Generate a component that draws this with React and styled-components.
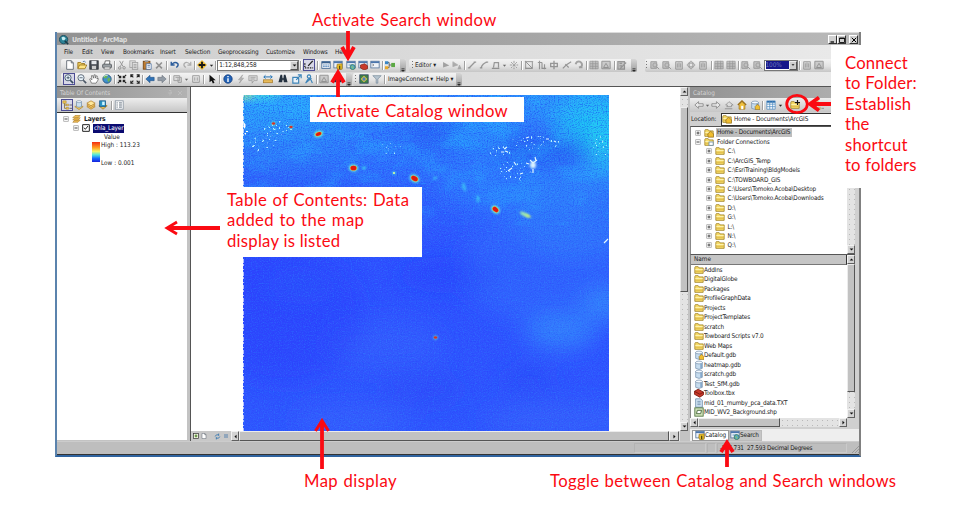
import React from "react";
import styled, { createGlobalStyle } from "styled-components";

const Global = createGlobalStyle`
  * { box-sizing: border-box; }
  body { margin: 0; background: #fff; overflow: hidden; }
`;

const ui = `"DejaVu Sans Condensed", "DejaVu Sans", sans-serif`;

const Page = styled.main`
  position: relative;
  width: 979px;
  height: 506px;
  overflow: hidden;
  background: #fff;
  font-family: ${ui};
  font-stretch: condensed;
  font-size: 6.4px;
  color: #1c1c1c;
`;

const AppWindow = styled.section`
  display: flex;
  flex-direction: column;
  width: 806px;
  height: 425px;
  margin: 32px 0 0 55px;
  border-left: 2px solid #5b83ad;
  border-right: 2px solid #808080;
  border-bottom: 2px solid #2f64a0;
  background: #c3c3c3;
`;

const TitleBar = styled.header`
  display: flex;
  align-items: center;
  gap: 3px;
  height: 13px;
  flex: none;
  padding: 1px 1px 0 2px;
  border-top: 1px solid #dcdcdc;
  background: linear-gradient(90deg, #929292, #a2a2a2 50%, #b9b9b9);
  color: #dedede;
  font-size: 7px;
  font-weight: bold;
  letter-spacing: -0.45px;
`;
const Grow = styled.div`
  flex: 1;
`;
const WindowButton = styled.span`
  display: grid;
  place-items: center;
  width: 9px;
  height: 9px;
  margin-left: ${(p) => (p.$first ? 0 : -3)}px;
  background: #d0d0d0;
  border: 1px solid;
  border-color: #fff #333 #333 #fff;
`;

const Bars = styled.div`
  flex: none;
  height: 42px;
  background: linear-gradient(90deg, #cdcdcd, #dadada 45%, #eaeaea);
  border-bottom: 1px solid #555;
`;
const MenuBar = styled.nav`
  display: flex;
  align-items: center;
  height: 13px;
  padding-left: 7px;
`;
const MenuItem = styled.span`
  width: ${(p) => p.$w}px;
  white-space: nowrap;
  letter-spacing: -0.15px;
`;
const ToolRow = styled.div`
  display: flex;
  align-items: center;
  height: 14px;
  padding-left: 4px;
`;
const ToolGroup = styled.div`
  display: flex;
  align-items: center;
  flex: none;
  width: ${(p) => p.$w}px;
  height: 13px;
  margin-right: ${(p) => p.$gap || 0}px;
  padding-left: ${(p) => p.$pad ?? 2}px;
  border-radius: 2px;
  background: linear-gradient(#f3f3f3, #e3e3e3 55%, #c6c6c6);
`;
const Slot = styled.span`
  display: grid;
  place-items: center;
  flex: none;
  width: ${(p) => p.$w}px;
  height: 12px;
  opacity: ${(p) => (p.$dim ? 0.62 : 1)};
`;
const Boxed = styled.span`
  display: grid;
  place-items: center;
  width: 12px;
  height: 12px;
  border: 1px solid #4d4d94;
  background: #d8d8e8;
`;
const Separator = styled.i`
  flex: none;
  width: 1px;
  height: 9px;
  margin: 0 1px;
  background: #a0a0a0;
  box-shadow: 1px 0 #fff;
`;
const Grip = styled.i`
  flex: none;
  width: 1px;
  height: 8px;
  margin: 0 2px 0 1px;
  background: repeating-linear-gradient(#777 0 1px, transparent 1px 3px);
`;
const Overflow = styled.span`
  display: grid;
  place-items: end center;
  width: 6px;
  height: 13px;
  margin-left: auto;
  border-radius: 0 2px 2px 0;
  background: linear-gradient(#d6d6d6, #9d9d9d);
`;
const ToolLabel = styled.span`
  flex: none;
  width: ${(p) => p.$w}px;
  white-space: nowrap;
  letter-spacing: -0.1px;
`;
const ScaleBox = styled.div`
  display: flex;
  align-items: center;
  flex: none;
  width: ${(p) => p.$w}px;
  height: 11px;
  padding-left: 1px;
  border: 1px solid #777;
  background: #fff;
  letter-spacing: -0.1px;
`;
const DropButton = styled.span`
  display: grid;
  place-items: center;
  width: 8px;
  height: 9px;
  margin-left: auto;
  background: #cfcfcf;
  border: 1px solid;
  border-color: #eee #555 #555 #eee;
`;
const Percent = styled.span`
  width: 23px;
  height: 8px;
  line-height: 8px;
  background: #16168a;
  color: #7078bd;
`;

const Body = styled.div`
  display: flex;
  flex: 1;
  min-height: 0;
`;
const StatusBar = styled.footer`
  display: flex;
  align-items: center;
  flex: none;
  height: 14px;
  border-top: 1px solid #ccc;
  border-bottom: 1px solid #333;
  background: #bebebe;
  padding-left: 577px;
`;
const StatusCell = styled.span`
  width: ${(p) => p.$w}px;
  height: 10px;
  line-height: 9px;
  margin-right: 1px;
  padding-left: ${(p) => p.$pad || 0}px;
  border: 1px solid;
  border-color: #b3b3b3 #cacaca #cacaca #b3b3b3;
  white-space: nowrap;
  letter-spacing: -0.26px;
`;
const ResizeGrip = styled.svg`
  margin: 2px 0 0 auto;
`;

const Contents = styled.aside`
  display: flex;
  flex-direction: column;
  width: 130px;
  flex: none;
`;
const PanelTitle = styled.div`
  display: flex;
  align-items: center;
  gap: 4px;
  flex: none;
  height: 11px;
  padding: 0 4px 0 3px;
  background: linear-gradient(90deg, #929292, #b2b2b2);
  color: #d3d3d3;
  letter-spacing: -0.03px;
`;
const PanelTools = styled.div`
  display: flex;
  align-items: center;
  flex: none;
  height: 14px;
  padding-left: 4px;
  background: linear-gradient(#eeeeee, #c6c6c6);
`;
const ContentsTree = styled.div`
  flex: 1;
  margin-bottom: 1px;
  padding: 1px 0 0 6px;
  background: #fff;
  border-top: 1px solid #333;
`;
const TreeRow = styled.div`
  display: flex;
  align-items: center;
  height: ${(p) => p.$h || 9.5}px;
  padding-left: ${(p) => p.$indent || 0}px;
  gap: 3px;
  white-space: nowrap;
  letter-spacing: -0.14px;
`;
const Bold = styled.b`
  font-size: 6.7px;
`;
const Selected = styled.span`
  height: 9px;
  line-height: 8px;
  padding: 0 1px;
  background: #0b0b70;
  color: #fff;
`;
const Legend = styled.div`
  display: flex;
  gap: 1px;
  margin: 0 0 0 29px;
`;
const Ramp = styled.i`
  width: 8px;
  height: 20px;
  background: linear-gradient(#f32d12, #ff9d21 28%, #f4f665 47%, #4ee7e0 64%, #156aff 82%, #1821dc);
`;
const LegendLabels = styled.div`
  display: flex;
  flex-direction: column;
  justify-content: space-between;
  height: 26px;
  margin-top: -1px;
  line-height: 8px;
  letter-spacing: 0;
`;
const LegendHeading = styled.div`
  height: 9px;
  line-height: 9px;
  padding-left: 41px;
`;

const MapPane = styled.section`
  display: grid;
  grid-template-columns: 489px 8px;
  grid-template-rows: 1fr 10px;
  flex: none;
  width: 500px;
  margin-left: 3px;
  border-left: 1px solid #555;
`;
const MapCanvas = styled.div`
  display: flex;
  padding: 8px 0 0 52px;
  background: #fff;
  overflow: hidden;
`;
const ScrollBar = styled.div`
  display: flex;
  flex-direction: ${(p) => (p.$row ? "row" : "column")};
  width: ${(p) => (p.$w ? `${p.$w}px` : "auto")};
  min-width: 0;
  background-color: #e3e3e3;
  background-image: radial-gradient(#b9b9b9 0.7px, transparent 0.8px);
  background-size: 5px 5px;
`;
const ScrollButton = styled.span`
  display: grid;
  place-items: center;
  flex: none;
  width: ${(p) => p.$w || 8}px;
  height: ${(p) => p.$h || 9}px;
  background: #d3d3d3;
  border: 1px solid;
  border-color: #f2f2f2 #606060 #606060 #f2f2f2;
`;
const Thumb = styled.i`
  flex: none;
  width: ${(p) => p.$w}px;
  height: ${(p) => p.$h}px;
  margin: ${(p) => p.$m || 0};
  background: #c2c2c2;
  border: 1px solid;
  border-color: #ececec #555 #555 #ececec;
`;
const ViewTools = styled.div`
  display: flex;
  align-items: center;
  justify-content: space-between;
  flex: none;
  width: 40px;
  padding: 0 2px;
  background: #c8c8c8;
`;
const ViewPair = styled.span`
  display: flex;
  gap: ${(p) => p.$gap}px;
`;

const CatalogPane = styled.aside`
  display: flex;
  flex-direction: column;
  width: 169px;
  flex: none;
  background: #d0d0d0;
`;
const LocationRow = styled.div`
  display: flex;
  align-items: center;
  flex: none;
  height: 14px;
  letter-spacing: -0.1px;
  padding-left: 1px;
`;
const LocationField = styled.div`
  display: flex;
  align-items: center;
  gap: 2px;
  width: 138px;
  height: 13px;
  margin-left: auto;
  border: 1px solid #333;
  background: #fff;
`;
const ListBox = styled.div`
  display: flex;
  flex: none;
  width: 165px;
  height: ${(p) => p.$h}px;
  background: #fff;
  border-top: 1px solid #555;
  border-left: 1px solid #888;
`;
const ListColumn = styled.div`
  display: flex;
  flex-direction: column;
  width: 156px;
  overflow: hidden;
  padding: ${(p) => p.$pad || 0};
`;
const HomeLabel = styled.span`
  height: 9px;
  line-height: 8.5px;
  margin-left: -1px;
  padding: 0 2px 0 1px;
  background: #bdbdbd;
`;
const NameHeader = styled.div`
  flex: none;
  height: 10px;
  line-height: 9px;
  padding-left: 3px;
  background: #c5c5c5;
  border-right: 1px solid #333;
  border-bottom: 1px solid #777;
`;
const FileRow = styled.div`
  display: flex;
  align-items: center;
  flex: none;
  height: 9.5px;
  padding-left: 3px;
  white-space: nowrap;
  letter-spacing: -0.17px;
`;
const Tabs = styled.div`
  display: flex;
  align-items: center;
  flex: 1;
  margin-top: 2px;
  padding-left: 2px;
  background: #eee;
`;
const Tab = styled.span`
  display: flex;
  align-items: center;
  width: ${(p) => p.$w}px;
  height: 11px;
  padding-left: ${(p) => (p.$on ? 2 : 0)}px;
  border: 1px solid ${(p) => (p.$on ? "#999" : "#bbb")};
  background: ${(p) => (p.$on ? "#fff" : "#c6c6c6")};
  letter-spacing: -0.15px;
`;

const Note = styled.div`
  position: absolute;
  left: ${(p) => p.$x}px;
  top: ${(p) => p.$y}px;
  width: ${(p) => p.$w}px;
  height: ${(p) => p.$h}px;
  padding: ${(p) => p.$pad || 0};
  background: #fff;
  color: #fb0a12;
  font: 16.7px/20.4px Lato, sans-serif;
  white-space: pre;
`;
const Line = styled.div`
  letter-spacing: ${(p) => p.$ls}px;
  word-spacing: ${(p) => p.$ws || 0}px;
`;
const Arrows = styled.svg`
  position: absolute;
  inset: 0;
  pointer-events: none;
`;

const folderShape = (
  <>
    <path d="M1 3V10H11V3.5H6L5 2H1.5Z" fill="#f7dc69" stroke="#a18428" />
    <path d="M1.5 5.5H10.5" stroke="#fff8c0" />
    <path d="M1.5 7.5H10.5" stroke="#d6b040" />
  </>
);
const windowShape = (
  <>
    <rect x="1" y="1.5" width="10" height="8" fill="#eef2f8" stroke="#55749a" />
    <path d="M1 2.7H11" stroke="#4b75ad" strokeWidth="2" />
  </>
);
const cylinder = (
  <>
    <path d="M2 3V10Q6 12.500 10 10V3Z" fill="#c7ddef" stroke="#6c88a4" strokeWidth=".8" />
    <ellipse cx="6" cy="3" rx="4" ry="1.7" fill="#f5faff" stroke="#6c88a4" strokeWidth=".8" />
    <path d="M8.500 4.500V10" stroke="#6f98c0" strokeWidth="1.500" />
  </>
);
const glyphs = {
  new: <path d="M2 .8H7.500L10 3.500V11.200H2ZM7.500 .8V3.500H10" fill="#fff" stroke="#59616c" />,
  open: (
    <>
      <path d="M1 10V3H4.500L5.500 4.200H9V6" fill="#e9c95c" stroke="#9b741b" />
      <path d="M1 10.500L3 6H11.700L9.500 10.500Z" fill="#ffe582" stroke="#9b741b" />
      <path d="M7 2Q9 .5 10.500 2.800" fill="none" stroke="#4b71a3" />
    </>
  ),
  save: (
    <>
      <rect x="1" y="1" width="10" height="10" fill="#4b5057" stroke="#22262c" />
      <rect x="3" y="1" width="6" height="4" fill="#e5e8eb" />
      <rect x="3.500" y="7" width="5" height="4" fill="#ccc" />
    </>
  ),
  print: (
    <>
      <path d="M3 5L4 1H9.500L9 5" fill="#fff" stroke="#555" />
      <rect x=".8" y="5" width="10.500" height="4.500" rx="1" fill="#9aa0a4" stroke="#4c5155" />
      <path d="M3 8.500H9.500V11H2.500Z" fill="#eee" stroke="#666" strokeWidth=".7" />
    </>
  ),
  cut: (
    <g fill="none" stroke="#6c6c6c" strokeWidth="1.200">
      <path d="M3 1L7.500 8M7.500 1L4 8" />
      <circle cx="3.300" cy="9.500" r="1.500" />
      <circle cx="8.500" cy="9.300" r="1.500" />
    </g>
  ),
  copy: (
    <g fill="#d8d8d8" stroke="#777">
      <rect x="1" y="1" width="6.500" height="8" />
      <rect x="4" y="3" width="6.500" height="8.200" />
      <path d="M5.500 5.500H9M5.500 7.200H9M5.500 9H9" />
    </g>
  ),
  paste: (
    <>
      <rect x="1.500" y="1.500" width="8" height="9.500" fill="#c17c2e" stroke="#704212" />
      <rect x="3.500" y=".5" width="4" height="2.200" fill="#999" />
      <path d="M5 4.500H11V11.200H5ZM6.500 6.500H9.500M6.500 8.500H9.500" fill="#fff" stroke="#446c9e" strokeWidth=".9" />
    </>
  ),
  del: <path d="M2.500 3L9.500 10M9.500 3L2.500 10" stroke="#5f5f5f" strokeWidth="2" />,
  undo: <path d="M1.500 2V6H5.500M2 5.500Q6 1 9.500 4.500Q10.500 7 7.500 9" fill="none" stroke="#2d5d9b" strokeWidth="1.700" />,
  redo: <path d="M10.500 2V6H6.500M10 5.500Q6 1 2.500 4.500Q1.500 7 4.500 9" fill="none" stroke="#888" strokeWidth="1.500" />,
  add: (
    <>
      <path d="M6 0L12 6L6 12L0 6Z" fill="#eebd36" />
      <path d="M6 2V10M2 6H10" stroke="#151515" strokeWidth="2.200" />
    </>
  ),
  caret: <path d="M2 4H10L6 9Z" fill="#222" />,
  editor: (
    <>
      <path d="M1 4V8.500M1 9.500H11" stroke="#222" strokeWidth="1.600" strokeDasharray="1.800 1.200" />
      <path d="M5 7L10.500 1" stroke="#222" strokeWidth="1.600" />
    </>
  ),
  table: (
    <>
      <rect x="1" y="2" width="10" height="8" fill="#fff" stroke="#39608e" />
      <path d="M1 3H11" stroke="#39608e" strokeWidth="2" />
      <path d="M2.500 6H9.500M2.500 8H9.500" stroke="#4b7fb7" strokeWidth="1.200" strokeDasharray="2 .6" />
    </>
  ),
  catalog: (
    <>
      {windowShape}
      <path d="M5 5L11 4.500V11L6 12L4.500 9Z" fill="#e8bd25" stroke="#846318" strokeWidth=".7" />
      <path d="M8 7V11" stroke="#4c4112" strokeWidth="1.500" />
    </>
  ),
  search: (
    <>
      {windowShape}
      <path d="M3 6H8" stroke="#79a5cf" strokeWidth="1.500" />
      <circle cx="8" cy="8.500" r="3" fill="#58a5d2" stroke="#3a7b54" />
      <path d="M7 7.500L8.500 10" stroke="#84c865" strokeWidth="1.700" />
    </>
  ),
  toolbox: (
    <>
      {windowShape}
      <path d="M3 6L8 4.500L11.500 7V10.500L7 12L3 9.500Z" fill="#c93a2a" stroke="#7d1f15" strokeWidth=".8" />
    </>
  ),
  python: (
    <>
      {windowShape}
      <path d="M3 5L4.500 6L3 7" fill="none" stroke="#333" strokeWidth=".8" />
    </>
  ),
  model: (
    <>
      <path d="M2.500 3H5V6H9M2.500 9H5V6" fill="none" stroke="#555" />
      <rect x="0" y="1.500" width="4" height="3.500" fill="#3a86c5" />
      <rect x="0" y="7.500" width="4" height="3.500" fill="#e7a92b" />
      <rect x="7.500" y="3.500" width="4.500" height="5" fill="#5ca944" />
    </>
  ),
  more: <path d="M3 5H9M3 8H9L6 11Z" fill="#222" stroke="#222" />,
  play: <path d="M2.500 2.500L10 6.500L2.500 9Z" fill="#777" />,
  playA: <path d="M1 2L7 6L1 8ZM7 11L9 6L11 11M8 9.500H10.500" fill="#888" stroke="#888" strokeWidth=".8" />,
  segment: <path d="M2.500 9.500L9.500 2.500M1 9.500H4M8 2.500H11" stroke="#666" strokeWidth="1.600" />,
  arc: <path d="M2.500 9.500Q4 4 9.500 2.500M1 9.500H4M8 2.500H11" fill="none" stroke="#666" strokeWidth="1.500" />,
  sketch: <path d="M1 10H10M3 9L4 3H9V9" fill="none" stroke="#666" strokeWidth="1.500" />,
  spark: <path d="M6 1V11M1 6H11M2.500 2.500L9.500 9.500M9.500 2.500L2.500 9.500" stroke="#777" strokeWidth="1.200" strokeDasharray="3 1" />,
  vertex: <path d="M2 1V11M1 2H11M10 2V10H2L10 10M2 2L10 10" fill="none" stroke="#666" strokeWidth="1.200" />,
  split: <path d="M3 1V11M1 3H6M6 3V10H11M9 5V11" fill="none" stroke="#666" strokeWidth="1.400" />,
  crossbox: <path d="M2 4H10V8H2ZM6 1V11" fill="none" stroke="#666" strokeWidth="1.600" />,
  slash: <path d="M1 10L5 6L11 2M4 5L8 9" stroke="#666" strokeWidth="1.400" />,
  rotate: <path d="M2 5Q3 1 7 2Q11 4 9 8L6 9M9 10V7" fill="none" stroke="#777" strokeWidth="2.300" />,
  grid: <path d="M1 1.500H11V10.500H1ZM1 4.500H11M1 7.500H11M4.500 1V11M8 1V11" fill="#aaa" stroke="#666" strokeWidth=".9" />,
  photo: <path d="M1 1.500H11V10.500H1ZM3 9L6 4L9 9Z" fill="#b8b8b8" stroke="#666" strokeWidth="1.200" />,
  edit: <path d="M1 2H9V11H1ZM3 4H6M3 7H6M4 10L11 3" fill="#aaa" stroke="#666" strokeWidth="1.400" />,
  pageZoom: <path d="M1 2H8V10H1ZM6 3.500A2.500 2.500 0 1 1 6 8.500A2.500 2.500 0 1 1 6 3.500M8 8L11 11" fill="#aaa" stroke="#777" strokeWidth="1.200" />,
  pageHand: <path d="M2 2H10V11H2ZM4 9V4M6 9V3M8 9V4" fill="#c4c4c4" stroke="#777" strokeWidth="1.200" />,
  move: <path d="M1 6L4 3V9ZM11 6L8 3V9ZM6 1L9 4H3ZM6 11L3 8H9Z" fill="#aaa" stroke="#777" strokeWidth=".9" />,
  zoomIn: (
    <g fill="#eaf5fc" stroke="#33485e">
      <circle cx="4.800" cy="4.500" r="3.700" />
      <path d="M7.500 7.500L11 11" strokeWidth="2" />
      <path d="M3 4.500H6.800M4.900 2.700V6.300" />
    </g>
  ),
  zoomOut: (
    <g fill="#eaf5fc" stroke="#4a5665">
      <circle cx="4.800" cy="4.500" r="3.700" />
      <path d="M7.500 7.500L11 11" strokeWidth="2" />
      <path d="M3 4.500H6.800" />
    </g>
  ),
  hand: <path d="M3 11L.8 6L2 5.500L3.500 7L3 2H4.500L5.500 5L6 1H7.500V5L9 2L10 2.500L9.500 6L11 5V7L8.500 11Z" fill="#fff" stroke="#555" strokeWidth=".8" />,
  globe: (
    <>
      <circle cx="6" cy="6" r="5" fill="#3f91cd" stroke="#29517b" />
      <path d="M4 1L7 2L5.500 5L2 5V3ZM8 4L10.500 6L8 10L6 7Z" fill="#69b359" />
      <path d="M2 3Q4 1 7 1.500" stroke="#e9faff" fill="none" />
    </>
  ),
  logo: (
    <>
      <circle cx="5.500" cy="5.500" r="5" fill="#2b8196" stroke="#174a5b" />
      <path d="M3 3Q6 1 8 4Q7 7 4 6Z" fill="#c8eef1" />
      <path d="M7 7L11 11" stroke="#173c4a" strokeWidth="2" />
    </>
  ),
  inward: <path d="M1 1L4.500 4.500M4.500 2V4.500H2M11 1L7.500 4.500M7.500 2V4.500H10M1 11L4.500 7.500M2 7.500H4.500V10M11 11L7.500 7.500M7.500 10V7.500H10" fill="none" stroke="#222" strokeWidth="1.300" />,
  outward: <path d="M1 1L4 4M1 4V1H4M11 1L8 4M8 1H11V4M1 11L4 8M1 8V11H4M11 11L8 8M8 11H11V8" fill="none" stroke="#222" strokeWidth="1.300" />,
  back: <path d="M1 6L6 1.500V4H11V8H6V10.500Z" fill="#2f72b6" stroke="#245386" strokeWidth=".7" />,
  forward: <path d="M11 6L6 1.500V4H1V8H6V10.500Z" fill="#929ba5" stroke="#6b747d" strokeWidth=".7" />,
  selectFeature: <path d="M1 2H8V8H1ZM3 4H10V10H6V5" fill="#d6d6d6" stroke="#777" strokeWidth="1.200" />,
  clear: <path d="M2 2H10V10H2ZM4.500 4V8M7.500 4V8" fill="#ddd" stroke="#777" strokeWidth="1.200" />,
  pointer: <path d="M3 1V10L5.500 8L7 11.500L9 10.500L7.500 7.500H10.500Z" fill="#111" />,
  identify: (
    <>
      <circle cx="6" cy="6" r="5" fill="#2364b8" stroke="#153d7e" />
      <path d="M6 2.500V4M6 5V9.500" stroke="#fff" strokeWidth="1.700" />
    </>
  ),
  lightning: <path d="M8 1L3 7H6L4 11L9 5H6Z" fill="#999" stroke="#777" strokeWidth=".8" />,
  bubble: <path d="M1 2H11V8H7L5 11V8H1ZM3 4H9M3 6H8" fill="#ccc" stroke="#777" />,
  measure: (
    <>
      <path d="M1 3.500H11M3 1.500L1 3.500L3 5.500M9 1.500L11 3.500L9 5.500" fill="none" stroke="#2674b5" strokeWidth="1.200" />
      <rect x=".5" y="7" width="11" height="3.500" fill="#e8bb59" stroke="#a27424" strokeWidth=".8" />
    </>
  ),
  find: <path d="M3 1H5L5.500 5H6.500L7 1H9L11.500 10H7L6.500 7H5.500L5 10H.5Z" fill="#24313f" />,
  route: <path d="M1 4H8V11H1ZM5 7L10 2M7 1H11V5" fill="#e9f2f9" stroke="#3d84b8" strokeWidth="1.400" />,
  person: <path d="M6 1A2 2 0 1 1 5.900 1ZM2 11Q5 5 6 6Q8 5 10 11M3 10L9 5" fill="none" stroke="#3d84b8" strokeWidth="1.400" />,
  world: (
    <>
      <rect x="1" y="1" width="10" height="10" fill="#3f8447" stroke="#2f425f" />
      <path d="M6 2L10 6L6 10L2 6Z" fill="#e3c24a" />
      <circle cx="6" cy="6" r="2" fill="#4f81b7" />
    </>
  ),
  dataView: (
    <>
      <rect x="1" y="1" width="10" height="10" fill="#f5f5e6" stroke="#333" strokeWidth="1.400" />
      <circle cx="6" cy="6" r="2.800" fill="#6b9b4b" />
    </>
  ),
  filter: <path d="M1 2H11L7 6V11H5V6Z" fill="#b7c5cf" stroke="#728797" strokeWidth=".8" />,
  listTree: (
    <>
      <path d="M3 3V10H7M3 6H6" fill="none" stroke="#8e7330" />
      <path d="M1 1H5V4H1ZM5 5H8V7H5ZM5 9H8V11H5Z" fill="#edc352" stroke="#a58230" strokeWidth=".6" />
      <path d="M9 6H12M9 10H12" stroke="#555" />
    </>
  ),
  cylinder,
  layers: (
    <g fill="#f4cd6b" stroke="#b4812b" strokeWidth=".9">
      <path d="M1 8L6 11L11 8L6 5Z" />
      <path d="M1 6L6 9L11 6L6 3Z" />
      <path d="M1 3.800L6 7L11 3.800L6 1Z" fill="#ffe89b" />
    </g>
  ),
  dbSource: (
    <>
      <path d="M1 8L6 11.500L11 8L6 6Z" fill="#eec75c" stroke="#ad8229" strokeWidth=".8" />
      <path d="M3 2V8Q6 9.500 9 8V2Z" fill="#c9deee" stroke="#6c88a4" strokeWidth=".8" />
      <ellipse cx="6" cy="2" rx="3" ry="1.200" fill="#f5faff" stroke="#6c88a4" strokeWidth=".7" />
    </>
  ),
  dbSelect: (
    <>
      <path d="M1 7L6 11L11 7L7 5Z" fill="#eec75c" stroke="#ad8229" />
      <rect x="2" y="1" width="7" height="7" fill="#2994c5" stroke="#225d89" />
      <rect x="5" y="2" width="3" height="4" fill="#d0f5ff" />
    </>
  ),
  options: (
    <>
      <rect x="1.500" y="1" width="9.500" height="10" fill="#fff" stroke="#8793a0" />
      <path d="M3 3.500H4.500M6 3.500H9.500M3 6H4.500M6 6H9.500M3 8.500H4.500M6 8.500H9.500" stroke="#465566" />
    </>
  ),
  stack: (
    <g fill="#f0bd54" stroke="#a97827" strokeWidth=".8">
      <path d="M1 11L4 8H11L8 11Z" />
      <path d="M1 8L4 5H11L8 8Z" />
      <path d="M1 5L4 2H11L8 5Z" />
    </g>
  ),
  folder: folderShape,
  folderLink: (
    <>
      {folderShape}
      <rect x="6" y="6" width="5" height="4" fill="#fff" stroke="#6b8daa" />
    </>
  ),
  folderHome: (
    <>
      {folderShape}
      <path d="M4.500 7L8 4L11.500 7V11H5Z" fill="#f0be31" stroke="#8c681b" strokeWidth=".8" />
    </>
  ),
  folderPlus: (
    <>
      {folderShape}
      <path d="M9 0V6M6 3H12" stroke="#111" strokeWidth="1.400" />
    </>
  ),
  home: (
    <>
      <path d="M1 6L6 1L11 6" fill="none" stroke="#976c16" strokeWidth="1.500" />
      <path d="M2.500 5.500V11H9.500V5.500L6 2Z" fill="#f0c03a" stroke="#976c16" strokeWidth=".8" />
      <rect x="5" y="7" width="2.500" height="4" fill="#fff" />
    </>
  ),
  homeGdb: (
    <>
      {cylinder}
      <path d="M6 8L9 5L12 8V11.500H6.500Z" fill="#f0be31" stroke="#8c681b" strokeWidth=".7" />
    </>
  ),
  arrowLeftOutline: <path d="M1 6L5.500 2V4.500H11V7.500H5.500V10Z" fill="#e9e9e9" stroke="#858585" />,
  arrowRightOutline: <path d="M11 6L6.500 2V4.500H1V7.500H6.500V10Z" fill="#e9e9e9" stroke="#858585" />,
  up: <path d="M1 10.500H10M3 8H9V6H11L6 2L2 6H4V8" fill="#ddd" stroke="#666" />,
  blueGrid: (
    <>
      <rect x="1" y="1" width="10" height="10" fill="#fff" />
      <path d="M1 2H11" stroke="#286bab" strokeWidth="2.500" />
      <path d="M1 5H11M1 8H11M1 11H11M1 1V11M4.500 1V11M8 1V11M11 1V11" stroke="#4c8bc3" strokeWidth=".9" />
    </>
  ),
  box: (
    <>
      <path d="M.5 4L5 1.500L11.500 5V8L7 11L.5 7.500Z" fill="#c63829" stroke="#75170d" />
      <path d="M.5 4L7 7.500L11.500 5" stroke="#75170d" />
    </>
  ),
  text: <path d="M2 1H8L10 3V11H2ZM4 4H8M4 6H8M4 8H8" fill="#d4e7f6" stroke="#6b8ca9" />,
  shape: (
    <>
      <rect x="1" y="1" width="10" height="10" fill="#d1e3bb" stroke="#486d38" />
      <path d="M3 8L4 4H9L8 8Z" fill="#fff" stroke="#395a2d" />
    </>
  ),
  refresh: <path d="M2 6Q3 2 8 3M8 1V5M10 6Q9 10 4 9M4 11V7" fill="none" stroke="#3979b1" strokeWidth="1.500" />,
  pause: <path d="M4 2V10M8 2V10" stroke="#4f7ead" strokeWidth="1.800" />,
  plus: (
    <>
      <rect x="1.500" y="1.500" width="9" height="9" fill="#fff" stroke="#929292" strokeWidth="1.300" />
      <path d="M3 6H9M6 3V9" stroke="#222" strokeWidth="1.500" />
    </>
  ),
  minus: (
    <>
      <rect x="1.500" y="1.500" width="9" height="9" fill="#fff" stroke="#929292" strokeWidth="1.300" />
      <path d="M3 6H9" stroke="#222" strokeWidth="1.700" />
    </>
  ),
  check: <path d="M1 1H11V11H1ZM3 5.500L5 8L9 3" fill="#fff" stroke="#222" strokeWidth="1.500" />,
  triUp: <path d="M1.500 8.500H10.500L6 3.500Z" fill="#111" />,
  triDown: <path d="M1.500 3.500H10.500L6 8.500Z" fill="#111" />,
  triLeft: <path d="M8.500 1.500V10.500L3.500 6Z" fill="#111" />,
  triRight: <path d="M3.500 1.500V10.500L8.500 6Z" fill="#111" />,
  minWin: <path d="M1 10H8" stroke="#000" strokeWidth="2.500" />,
  maxWin: <path d="M1 2H11V11H1ZM1 3H11" fill="none" stroke="#000" strokeWidth="1.700" />,
  closeWin: <path d="M1.500 1.500L10.500 10.500M10.500 1.500L1.500 10.500" stroke="#000" strokeWidth="2" />,
  pin: <path d="M4 1H8V6H10H2M6 6V11" fill="none" stroke="#c4c4c4" strokeWidth="1.200" />,
  paleX: <path d="M2 2L10 10M10 2L2 10" stroke="#c4c4c4" strokeWidth="1.300" />,
};

const Svg = styled.svg`
  display: block;
  flex: none;
`;
function Icon({ name, size = 10 }) {
  return (
    <Svg width={size} height={size} viewBox="0 0 12 12" fill="none">
      {glyphs[name]}
    </Svg>
  );
}

function Tools({ items }) {
  return items.map((it, i) => {
    if (it === "|") return <Separator key={i} />;
    const [name, w = 12.2, opt] = it;
    if (name === "gap") return <Slot key={i} $w={w} />;
    return (
      <Slot key={i} $w={w} $dim={opt === "dim"}>
        {opt === "boxed" ? (
          <Boxed>
            <Icon name={name} size={10} />
          </Boxed>
        ) : (
          <Icon name={name} size={name === "caret" ? 5 : 10} />
        )}
      </Slot>
    );
  });
}

const menus = [
  ["File", 18], ["Edit", 19], ["View", 22], ["Bookmarks", 37], ["Insert", 25],
  ["Selection", 33], ["Geoprocessing", 48], ["Customize", 37], ["Windows", 32], ["Help", 20],
];
const standardA = [["new"], ["open"], ["save"], ["print"], "|", ["cut", 12.4, "dim"], ["copy", 12.4, "dim"], ["paste", 12.4], ["del", 12.4, "dim"], "|", ["undo", 12.6], ["redo", 12.4, "dim"], "|", ["add", 12], ["caret", 6], "|"];
const standardB = [["editor", 14, "boxed"], "|", ["table", 13], ["catalog"], ["search"], ["toolbox"], ["python"], "|", ["model", 12]];
const editorA = [["play", 11, "dim"], ["playA", 12, "dim"], "|", ["segment", 12, "dim"], ["arc", 12, "dim"], ["sketch", 12, "dim"], ["caret", 5, "dim"], ["spark", 13, "dim"], "|", ["vertex", 12.5, "dim"], ["split", 12.5, "dim"], ["crossbox", 12.5, "dim"], ["slash", 12, "dim"], ["rotate", 12, "dim"], "|", ["grid", 12, "dim"], ["photo", 13, "dim"], "|", ["edit", 12, "dim"]];
const layoutTools = [["pageZoom", 12, "dim"], ["pageZoom", 12, "dim"], ["pageHand", 12.2, "dim"], ["move", 12.2, "dim"], ["pageHand", 12.2, "dim"], "|", ["grid", 12, "dim"], ["grid", 12, "dim"], "|", ["pageZoom", 12, "dim"], ["pageZoom", 12, "dim"]];
const mapTools = [["zoomIn", 12.4, "boxed"], ["zoomOut", 12.4], ["hand", 12.4], ["globe", 13], "|", ["inward", 12.6], ["outward"], "|", ["back", 12.5], ["forward", 12], "|", ["selectFeature", 12.5, "dim"], ["caret", 6, "dim"], ["clear", 12.5, "dim"], "|", ["pointer", 12.5], "|", ["identify", 14], ["lightning", 12, "dim"], ["bubble", 13, "dim"], ["measure", 16], ["find", 15], ["route", 12], ["person", 12], "|", ["photo", 13, "dim"], ["find", 12]];

const drives = ["C:\\", "C:\\ArcGIS_Temp", "C:\\EsriTraining\\BldgModels", "C:\\TOWBOARD_GIS", "C:\\Users\\Tomoko.Acoba\\Desktop", "C:\\Users\\Tomoko.Acoba\\Downloads", "D:\\", "G:\\", "L:\\", "N:\\", "Q:\\"];
const files = [
  ["folder", "AddIns"], ["folder", "DigitalGlobe"], ["folder", "Packages"], ["folder", "ProfileGraphData"],
  ["folder", "Projects"], ["folder", "ProjectTemplates"], ["folder", "scratch"], ["folder", "Towboard Scripts v7.0"],
  ["folder", "Web Maps"], ["homeGdb", "Default.gdb"], ["cylinder", "heatmap.gdb"], ["cylinder", "scratch.gdb"],
  ["cylinder", "Test_SfM.gdb"], ["box", "Toolbox.tbx"], ["text", "mid_01_mumby_pca_data.TXT"], ["shape", "MID_WV2_Background.shp"],
];

/* Chlorophyll raster: soft colour fields, speckle, then the hot spots. */
const haze = [
  [35, 12, 80, 26, "#2cb4fc", 0.6], [50, 50, 60, 25, "#3396fb", 0.4],
  [150, 60, 60, 20, "#3180ff", 0.4], [235, 38, 38, 18, "#2ba2ff", 0.55], [350, 22, 40, 28, "#20dcf3", 0.7],
  [362, 52, 18, 28, "#22e4ef", 0.75], [310, 8, 60, 9, "#29a9fb", 0.5], [280, 90, 85, 30, "#3088ff", 0.55],
  [330, 120, 60, 45, "#338afc", 0.5], [300, 170, 80, 60, "#3377fc", 0.45], [318, 237, 36, 17, "#379cfb", 0.6],
  [362, 210, 24, 16, "#39a0fb", 0.6], [140, 250, 60, 25, "#3a64fd", 0.5], [60, 190, 35, 12, "#386cfd", 0.4],
  [300, 55, 50, 12, "#1d42e8", 0.55], [190, 38, 26, 16, "#244ff0", 0.5], [60, 82, 60, 10, "#3260f4", 0.4],
  [40, 220, 80, 70, "#2637fd", 0.35], [205, 180, 50, 18, "#243afa", 0.3], [285, 285, 26, 14, "#2846f4", 0.4],
  [180, 295, 40, 16, "#2943f6", 0.3], [110, 325, 60, 12, "#3d6cfd", 0.5], [320, 325, 80, 16, "#3b68fb", 0.5],
];
const spots = [[75.5, 39, 3.4, 2, -20], [110.5, 73, 3.4, 2.6, 0], [171.500, 83.500, 3.900, 2.500, 30], [252.500, 114.500, 3.600, 2.400, 40]];
const streaks = [[121, 73, 2, 2, 0], [151, 78, 2.2, 1.6, 0], [192, 83, 2.500, 1.2, -30], [221, 92, 1.4, 4.500, -15], [235, 104, 1.3, 3.500, 0], [282, 119.5, 5.500, 1.800, 25]];

function Raster() {
  return (
    <Svg width="366" height="336" viewBox="0 0 366 336">
      <defs>
        <linearGradient id="sea" x1="0" y1="0" x2="0" y2="1">
          <stop offset="0" stopColor="#3384fc" />
          <stop offset=".22" stopColor="#3266fd" />
          <stop offset=".5" stopColor="#3050ff" />
          <stop offset="1" stopColor="#3055fe" />
        </linearGradient>
        <linearGradient id="fade" x1="0" y1="0" x2="0" y2="1">
          <stop offset="0" stopColor="#fff" />
          <stop offset=".25" stopColor="#bbb" />
          <stop offset=".5" stopColor="#777" />
          <stop offset="1" stopColor="#6a6a6a" />
        </linearGradient>
        <mask id="topMask"><rect width="366" height="336" fill="url(#fade)" /></mask>
        <filter id="soft" x="-50%" y="-50%" width="200%" height="200%"><feGaussianBlur stdDeviation="11" /></filter>
        <filter id="glow" x="-50%" y="-50%" width="200%" height="200%"><feGaussianBlur stdDeviation=".8" /></filter>
        <filter id="corner" x="-50%" y="-50%" width="200%" height="200%"><feGaussianBlur stdDeviation="2.500" /></filter>
        <filter id="lightGrain" x="0" y="0" width="100%" height="100%" colorInterpolationFilters="sRGB">
          <feTurbulence type="fractalNoise" baseFrequency=".83 .77" numOctaves="1" seed="5" />
          <feColorMatrix values="0 0 0 0 .16  0 0 0 0 .78  0 0 0 0 1  2.400 0 0 0 -1.100" />
        </filter>
        <filter id="darkGrain" x="0" y="0" width="100%" height="100%" colorInterpolationFilters="sRGB">
          <feTurbulence type="fractalNoise" baseFrequency=".79 .86" numOctaves="1" seed="11" />
          <feColorMatrix values="0 0 0 0 .1  0 0 0 0 .22  0 0 0 0 .95  2.400 0 0 0 -1.100" />
        </filter>
        <filter id="cloud" x="0" y="0" width="100%" height="100%" colorInterpolationFilters="sRGB">
          <feTurbulence type="fractalNoise" baseFrequency=".03 .045" numOctaves="5" seed="8" />
          <feColorMatrix values="0 0 0 0 .17  0 0 0 0 .72  0 0 0 0 1  4 0 0 0 -1.850" />
        </filter>
        <filter id="flecks" x="-10%" y="-10%" width="120%" height="120%" colorInterpolationFilters="sRGB">
          <feTurbulence type="fractalNoise" baseFrequency=".42" numOctaves="2" seed="22" result="n" />
          <feColorMatrix in="n" values="0 0 0 0 .7  0 0 0 0 .94  0 0 0 0 1  12 0 0 0 -7.900" result="f" />
          <feComposite in="f" in2="SourceGraphic" operator="in" />
        </filter>
      </defs>
      <rect width="366" height="336" fill="url(#sea)" />
      <g filter="url(#soft)">
        {haze.map(([x, y, rx, ry, c, o], i) => (
          <ellipse key={i} cx={x} cy={y} rx={rx} ry={ry} fill={c} opacity={o} />
        ))}
      </g>
      <g filter="url(#corner)">
        <ellipse cx="12" cy="1" rx="26" ry="4.500" fill="#52e8d8" opacity=".8" />
        <ellipse cx="3" cy="1" rx="9" ry="4" fill="#b9f78b" opacity=".8" />
      </g>
      <g mask="url(#topMask)">
        <rect width="366" height="130" filter="url(#cloud)" opacity=".4" />
        <rect width="366" height="336" filter="url(#lightGrain)" opacity=".6" />
        <rect width="366" height="336" filter="url(#darkGrain)" opacity=".75" />
      </g>
      <g filter="url(#flecks)" fill="#fff">
        <ellipse cx="258" cy="56" rx="12" ry="6" />
        <ellipse cx="292" cy="48" rx="26" ry="7" />
        <ellipse cx="272" cy="76" rx="17" ry="10" />
        <ellipse cx="150" cy="53" rx="12" ry="7" />
        <ellipse cx="20" cy="48" rx="14" ry="9" />
        <ellipse cx="35" cy="34" rx="14" ry="9" />
        <ellipse cx="358" cy="52" rx="9" ry="12" />
      </g>
      <ellipse cx="290" cy="70" rx="3" ry="3.500" fill="#d9f2ff" filter="url(#glow)" />
      <path d="M287 65l3 3 4-3M290 74v4M283 68l3 1M292 62l1 4M261 54l3-2M258 57l3 0M262 56l3 1M303 44h3M311 46l2 1M283 43l3-1M271 67l2 3M265 76l4-3M277 79l3-1M361 148l2-2 2-2" stroke="#dff5ff" strokeWidth="1.200" fill="none" />
      <path d="M.3 0V336" stroke="#fff" strokeWidth=".8" strokeDasharray="2 3 1 2 4 1" />
      <path d="M0 27L2.500 29V32L1 34ZM1 38H3V40ZM3 36H5V37H3Z" fill="#fff" />
      {streaks.map(([x, y, rx, ry, a], i) => (
        <ellipse key={i} cx={x} cy={y} rx={rx} ry={ry} transform={`rotate(${a} ${x} ${y})`} fill={i === 5 ? "#a6f4ad" : "#42dff1"} opacity={i === 5 ? 1 : 0.75} filter="url(#glow)" />
      ))}
      <ellipse cx="285" cy="121" rx="3" ry="1" transform="rotate(25 285 121)" fill="#d4f16e" filter="url(#glow)" />
      <circle cx="151" cy="78" r="1.100" fill="#d8ff9a" />
      {spots.map(([x, y, rx, ry, a], i) => (
        <g key={i} transform={`rotate(${a} ${x} ${y})`}>
          <ellipse cx={x} cy={y} rx={rx + 1.200} ry={ry + 1} fill="#70f7d3" filter="url(#glow)" />
          <ellipse cx={x} cy={y} rx={rx} ry={ry} fill="#f5a821" />
          <ellipse cx={x} cy={y} rx={rx - 0.500} ry={ry - 0.300} fill="#df1910" />
        </g>
      ))}
      {[[30.500, 28.500], [48, 32], [192.500, 242.500]].map(([x, y]) => (
        <g key={x}>
          <circle cx={x} cy={y} r="1.900" fill="#6ce0c7" filter="url(#glow)" />
          <ellipse cx={x} cy={y} rx="1.700" ry="1.200" fill="#d63227" />
        </g>
      ))}
    </Svg>
  );
}

export default function App() {
  return (
    <Page>
      <Global />
      <Note $x={312} $y={10} $w={190} $h={21}>
        <Line $ls={0.32} $ws={0.8}>Activate Search window</Line>
      </Note>
      <AppWindow>
        <TitleBar>
          <Icon name="logo" />
          Untitled - ArcMap
          <Grow />
          <WindowButton $first><Icon name="minWin" size={6} /></WindowButton>
          <WindowButton><Icon name="maxWin" size={6} /></WindowButton>
          <WindowButton $first><Icon name="closeWin" size={6} /></WindowButton>
        </TitleBar>
        <Bars>
          <MenuBar>
            {menus.map(([label, w]) => <MenuItem key={label} $w={w}>{label}</MenuItem>)}
          </MenuBar>
          <ToolRow>
            <ToolGroup $w={345} $gap={3} $pad={3}>
              <Tools items={standardA} />
              <ScaleBox $w={82}>1:12,848,258<DropButton><Icon name="triDown" size={5} /></DropButton></ScaleBox>
              <Separator />
              <Tools items={standardB} />
              <Overflow><Icon name="more" size={6} /></Overflow>
            </ToolGroup>
            <ToolGroup $w={228} $gap={8}>
              <Grip />
              <ToolLabel $w={25}>Editor ▾</ToolLabel>
              <Tools items={editorA} />
              <Overflow><Icon name="more" size={6} /></Overflow>
            </ToolGroup>
            <ToolGroup $w={200} $pad={0}>
              <Grip />
              <Tools items={layoutTools} />
              <ScaleBox $w={34}><Percent>100%</Percent><DropButton><Icon name="triDown" size={4} /></DropButton></ScaleBox>
              <Tools items={["|", ["pageHand", 12, "dim"], ["photo", 12, "dim"]]} />
            </ToolGroup>
          </ToolRow>
          <ToolRow>
            <ToolGroup $w={291} $gap={1}>
              <Tools items={mapTools} />
              <Overflow><Icon name="more" size={6} /></Overflow>
            </ToolGroup>
            <ToolGroup $w={109} $pad={1}>
              <Grip />
              <Tools items={[["world", 12], ["filter", 13], "|", ["gap", 2]]} />
              <ToolLabel $w={48}>ImageConnect ▾</ToolLabel>
              <ToolLabel $w={20}>Help ▾</ToolLabel>
              <Overflow><Icon name="more" size={6} /></Overflow>
            </ToolGroup>
          </ToolRow>
        </Bars>
        <Body>
          <Contents>
            <PanelTitle>Table Of Contents<Grow /><Icon name="pin" size={6} /><Icon name="paleX" size={6} /></PanelTitle>
            <PanelTools>
              <Tools items={[["listTree", 12, "boxed"], ["dbSource"], ["layers"], ["dbSelect"], "|", ["options", 13]]} />
            </PanelTools>
            <ContentsTree>
              <TreeRow><Icon name="minus" size={6} /><Icon name="stack" size={9} /><Bold>Layers</Bold></TreeRow>
              <TreeRow $indent={10}><Icon name="minus" size={6} /><Icon name="check" size={8} /><Selected>chla_Layer</Selected></TreeRow>
              <LegendHeading>Value</LegendHeading>
              <Legend>
                <Ramp />
                <LegendLabels><span>High : 113.23</span><span>Low : 0.001</span></LegendLabels>
              </Legend>
            </ContentsTree>
          </Contents>
          <MapPane>
            <MapCanvas><Raster /></MapCanvas>
            <ScrollBar>
              <ScrollButton><Icon name="triUp" size={5} /></ScrollButton>
              <Thumb $w={8} $h={185} $m="11px 0 auto" />
              <ScrollButton><Icon name="triDown" size={5} /></ScrollButton>
            </ScrollBar>
            <ScrollBar $row>
              <ViewTools>
                <ViewPair $gap={2}><Icon name="dataView" size={6} /><Icon name="new" size={6} /></ViewPair>
                <ViewPair $gap={2}><Icon name="refresh" size={7} /><Icon name="pause" size={6} /></ViewPair>
              </ViewTools>
              <ScrollButton $h={10}><Icon name="triLeft" size={5} /></ScrollButton>
              <Thumb $w={430} $h={10} />
              <ScrollButton $w={10} $h={10}><Icon name="triRight" size={5} /></ScrollButton>
            </ScrollBar>
          </MapPane>
          <CatalogPane>
            <PanelTitle>Catalog</PanelTitle>
            <PanelTools>
              <Tools items={[["arrowLeftOutline", 10], ["caret", 6, "dim"], ["arrowRightOutline", 11], ["up", 15, "dim"], ["home", 12], ["homeGdb", 13], "|", ["blueGrid", 13], ["caret", 6], ["gap", 5], ["folderPlus", 13], ["gap", 12], ["listTree", 12, "dim"]]} />
            </PanelTools>
            <LocationRow>Location:<LocationField><Icon name="folderHome" />Home - Documents\ArcGIS</LocationField></LocationRow>
            <ListBox $h={128}>
              <ListColumn $pad="1px 0 0 4px">
                <TreeRow $h={9.4}><Icon name="plus" size={6} /><Icon name="folderHome" size={10} /><HomeLabel>Home - Documents\ArcGIS</HomeLabel></TreeRow>
                <TreeRow $h={9.4}><Icon name="minus" size={6} /><Icon name="folderLink" size={10} />Folder Connections</TreeRow>
                {drives.map((d) => (
                  <TreeRow key={d} $h={9.4} $indent={10.5}><Icon name="plus" size={6} /><Icon name="folder" size={10} />{d}</TreeRow>
                ))}
              </ListColumn>
              <ScrollBar>
                <Thumb $w={8} $h={58} $m="0 0 auto" />
                <ScrollButton><Icon name="triDown" size={5} /></ScrollButton>
              </ScrollBar>
            </ListBox>
            <ListBox $h={164}>
              <ListColumn>
                <NameHeader>Name</NameHeader>
                {files.map(([icon, name]) => (
                  <FileRow key={name}><Icon name={icon} />{name}</FileRow>
                ))}
              </ListColumn>
              <ScrollBar>
                <ScrollButton><Icon name="triUp" size={5} /></ScrollButton>
                <Thumb $w={8} $h={128} $m="0 0 auto" />
                <ScrollButton><Icon name="triDown" size={5} /></ScrollButton>
              </ScrollBar>
            </ListBox>
            <ScrollBar $row $w={157}>
              <ScrollButton><Icon name="triLeft" size={5} /></ScrollButton>
              <Thumb $w={82} $h={9} $m="0 auto 0 0" />
              <ScrollButton><Icon name="triRight" size={5} /></ScrollButton>
            </ScrollBar>
            <Tabs>
              <Tab $on $w={37}><Icon name="catalog" />Catalog</Tab>
              <Tab $w={33}><Icon name="search" />Search</Tab>
            </Tabs>
          </CatalogPane>
        </Body>
        <StatusBar>
          <StatusCell $w={72} />
          <StatusCell $w={9} />
          <StatusCell $w={130} $pad={2}>-155.731&nbsp; 27.593 Decimal Degrees</StatusCell>
          <ResizeGrip width="8" height="8" viewBox="0 0 8 8" stroke="#999">
            <path d="M1 8L8 1M4 8L8 4M7 8L8 7" />
          </ResizeGrip>
        </StatusBar>
      </AppWindow>

      <Note $x={831} $y={45} $w={148} $h={143} $pad="8px 0 0 14px">
        {["Connect", "to Folder:", "Establish", "the", "shortcut", "to folders"].map((t) => (
          <Line key={t} $ls={0.16}>{t}</Line>
        ))}
      </Note>
      <Note $x={310} $y={97} $w={214} $h={25} $pad="4px 0 0 7px">
        <Line $ls={0.3} $ws={0.8}>Activate Catalog window</Line>
      </Note>
      <Note $x={220} $y={187} $w={202} $h={70} $pad="3px 0 0 7px">
        <Line $ls={0.35} $ws={0.8}>Table of Contents: Data</Line>
        <Line $ls={0.38} $ws={0.8}>added to the map</Line>
        <Line $ls={0.25}>display is listed</Line>
      </Note>
      <Note $x={304} $y={471} $w={110} $h={24}>
        <Line $ls={0.4} $ws={0.8}>Map display</Line>
      </Note>
      <Note $x={550} $y={471} $w={360} $h={24}>
        <Line $ls={0.34} $ws={0.6}>Toggle between Catalog and Search windows</Line>
      </Note>
      <Arrows width="979" height="506" viewBox="0 0 979 506" fill="none" stroke="#fb0a12" strokeWidth="3.800">
        <path d="M348 31V57M342 47L348 57.500L354 47" />
        <path d="M338 97V73M332 82.500L338 72.500L344 82.500" />
        <path d="M220 228H168" />
        <path d="M177 222L167 228L177 234" strokeWidth="2.800" />
        <path d="M322 469V421" />
        <path d="M315.500 431L322 420.500L328.500 431" strokeWidth="3" />
        <path d="M727 467V443M721 452L727 442.500L733 452" />
        <path d="M831 104H811M819 97.500L810 104L819 110.500" />
        <ellipse cx="797" cy="104" rx="10.300" ry="8.700" strokeWidth="2.800" />
      </Arrows>
    </Page>
  );
}
